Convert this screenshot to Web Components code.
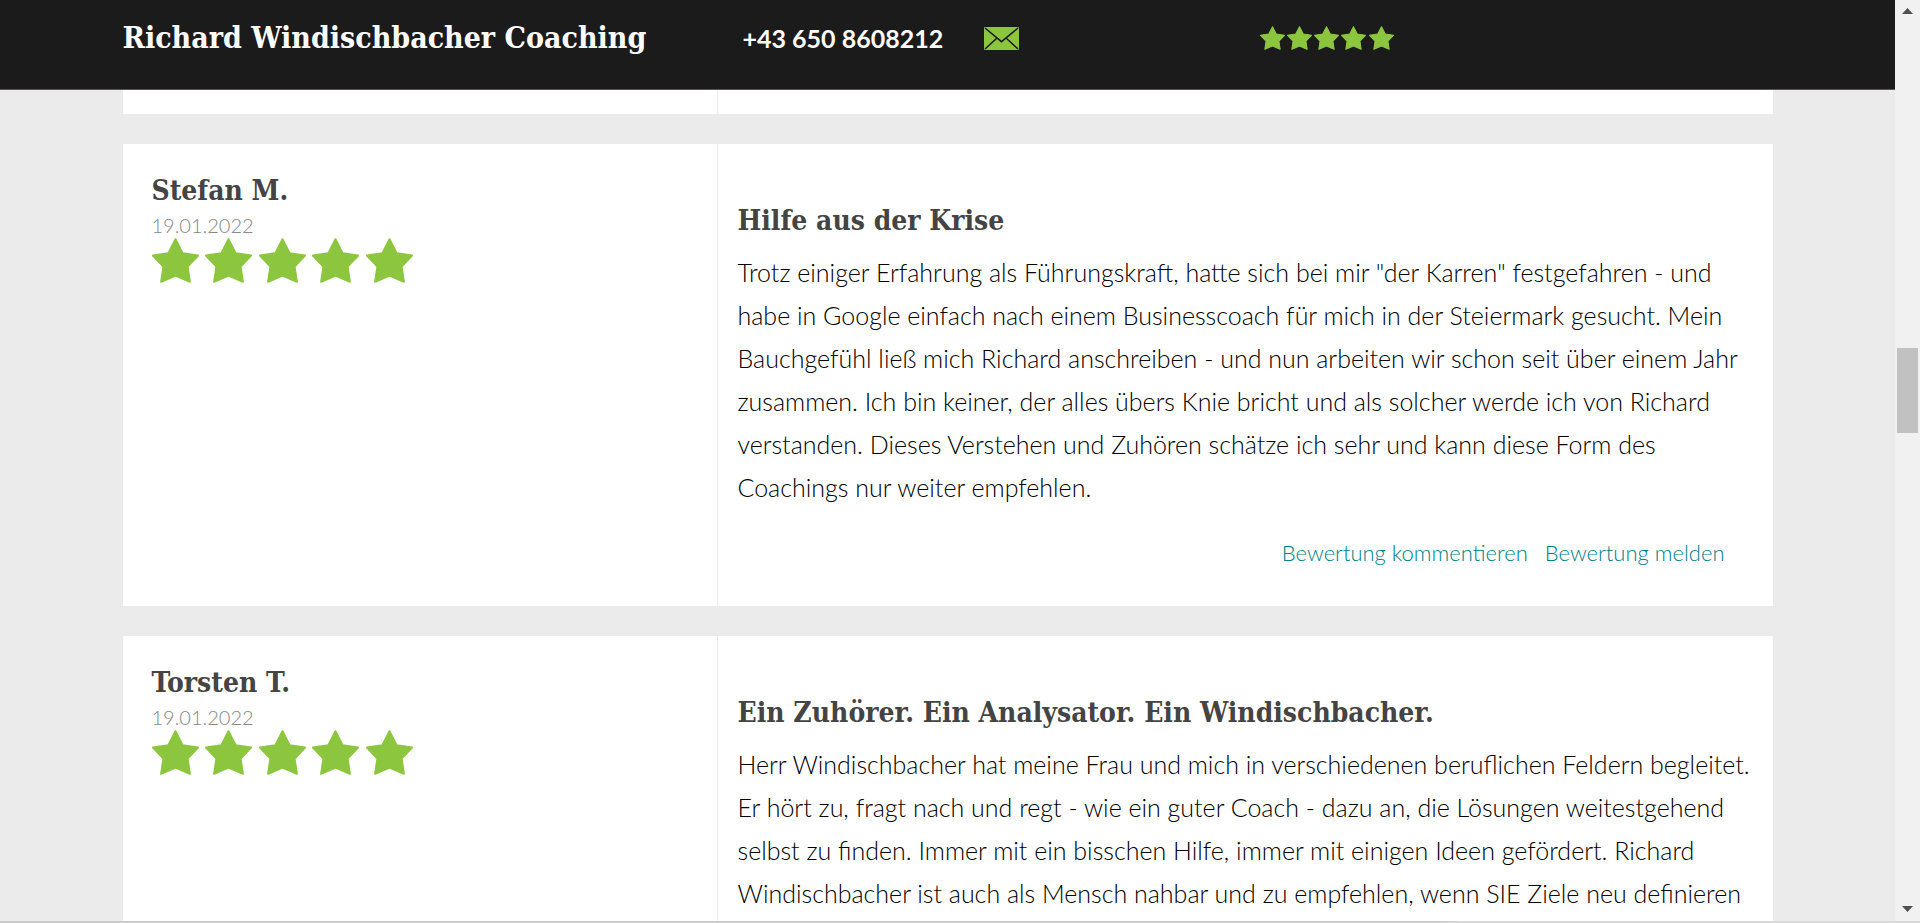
<!DOCTYPE html>
<html lang="de">
<head>
<meta charset="utf-8">
<title>Richard Windischbacher Coaching</title>
<style>
  body { margin: 0; background: #ebebeb; font-family: Lato, "Open Sans", sans-serif; overflow: hidden; }
</style>
</head>
<body>
<review-page>
  <site-header slot="header" phone="+43 650 8608212">Richard Windischbacher Coaching</site-header>
  <review-tail></review-tail>
  <review-card name="Stefan M." date="19.01.2022" headline="Hilfe aus der Krise">Trotz einiger Erfahrung als Führungskraft, hatte sich bei mir "der Karren" festgefahren - und habe in Google einfach nach einem Businesscoach für mich in der Steiermark gesucht. Mein Bauchgefühl ließ mich Richard anschreiben - und nun arbeiten wir schon seit über einem Jahr zusammen. Ich bin keiner, der alles übers Knie bricht und als solcher werde ich von Richard verstanden. Dieses Verstehen und Zuhören schätze ich sehr und kann diese Form des Coachings nur weiter empfehlen.</review-card>
  <review-card name="Torsten T." date="19.01.2022" headline="Ein Zuhörer. Ein Analysator. Ein Windischbacher.">Herr Windischbacher hat meine Frau und mich in verschiedenen beruflichen Feldern begleitet. Er hört zu, fragt nach und regt - wie ein guter Coach - dazu an, die Lösungen weitestgehend selbst zu finden. Immer mit ein bisschen Hilfe, immer mit einigen Ideen gefördert. Richard Windischbacher ist auch als Mensch nahbar und zu empfehlen, wenn SIE Ziele neu definieren</review-card>
  <scroll-rail slot="rail"></scroll-rail>
</review-page>

<script>
const define = (name, html, setup) => {
  const template = document.createElement('template');
  template.innerHTML = html;
  customElements.define(name, class extends HTMLElement {
    constructor() {
      super();
      this.attachShadow({ mode: 'open' }).append(template.content.cloneNode(true));
    }
    connectedCallback() { if (setup) setup(this, this.shadowRoot); }
  });
};

const star = `<svg viewBox="0 0 47 45" aria-hidden="true"><path fill="#8cc63f" stroke="#8cc63f" stroke-width="2" stroke-linejoin="round" d="M23.5 1.2 30.6 15.2 46 17.6 35.6 28.6 37.9 43.8 23.5 37.6 9.1 43.8 11.4 28.6 1 17.6 16.4 15.2Z"/></svg>`;

define('star-rating', `
<style>
  :host { display: flex; justify-content: space-between; width: var(--stars-width, 261px); }
  svg { display: block; width: var(--star-size, 47px); height: auto; }
</style>${star.repeat(5)}`);

define('site-header', `
<style>
  :host { display: block; background: #1b1b1b; border-bottom: 1px solid #5a5357; }
  .bar { display: grid; grid-template-columns: 620fr 241fr 276fr 513fr; align-items: center;
         box-sizing: border-box; max-width: 1650px; margin: 0 auto; padding: 18px 0 31px; color: #fff; }
  .title { font: bold 30px/40px "DejaVu Serif Condensed", "DejaVu Serif", serif; white-space: nowrap; }
  a { color: inherit; text-decoration: none; }
  .phone { font-size: 25px; line-height: 40px; font-weight: bold; white-space: nowrap; }
  .mail svg { display: block; width: 35px; height: 23px; }
  star-rating { --star-size: 25px; --stars-width: 134px; }
</style>
<div class="bar">
  <a class="title" href="#"><slot></slot></a>
  <a class="phone" href="tel:+436508608212"></a>
  <a class="mail" href="#kontakt" aria-label="E-Mail">
    <svg viewBox="0 0 35 23"><rect width="35" height="23" rx="1" fill="#8cc63f"/>
      <path d="M1 1 17.5 14.6 34 1M1 22 13 11M34 22 22 11" fill="none" stroke="#1b1b1b" stroke-width="1.6"/></svg>
  </a>
  <star-rating></star-rating>
</div>`, (el, root) => { root.querySelector('.phone').textContent = el.getAttribute('phone'); });

const cardBox = `
  :host { display: grid; grid-template-columns: 36% 1fr; background: #fff; }
  .body { border-left: 1px solid #ededed; }`;

define('review-tail', `<style>${cardBox}
  :host { height: 24px; }
</style><div></div><div class="body"></div>`);

define('review-card', `
<style>${cardBox}
  .author { padding: 26px 29px; }
  h2, h3 { margin: 0; color: #444; font: bold 28px/42px "DejaVu Serif Condensed", "DejaVu Serif", serif; }
  time { display: block; color: #888; font-size: 20px; line-height: 26px; font-weight: 300; }
  .body { padding: 56px 12px 38px 20px; }
  p { margin: 9px 0 29px; color: #000; font-size: 25px; line-height: 43px; font-weight: 300; }
  nav { display: flex; justify-content: flex-end; gap: 17px; padding-right: 36px; }
  a { color: #007f8a; text-decoration: none; font-size: 22px; line-height: 30px; font-weight: 300; }
</style>
<div class="author"><h2></h2><time></time><star-rating></star-rating></div>
<div class="body">
  <h3></h3>
  <p><slot></slot></p>
  <nav><a href="#kommentieren">Bewertung kommentieren</a><a href="#melden">Bewertung melden</a></nav>
</div>`, (el, root) => {
  root.querySelector('h2').textContent = el.getAttribute('name');
  root.querySelector('time').textContent = el.getAttribute('date');
  root.querySelector('h3').textContent = el.getAttribute('headline');
});

define('scroll-rail', `
<style>
  :host { display: grid; grid-template-rows: 22px 326fr 85px 464fr 24px; justify-items: center; background: #f1f1f1; }
  svg { display: block; width: 11px; height: 6px; align-self: center; }
  .thumb { grid-row: 3; width: 21px; background: #c1c1c1; }
  .down { grid-row: 5; }
</style>
<svg viewBox="0 0 11 6"><path fill="#505050" d="M0 6 5.500 0 11 6Z"/></svg>
<div class="thumb"></div>
<svg class="down" viewBox="0 0 11 6"><path fill="#505050" d="M0 0h11L5.500 6Z"/></svg>`);

define('review-page', `
<style>
  :host { display: grid; grid-template-columns: 1fr 25px; grid-template-rows: 1fr 2px; height: 100vh; }
  .view { overflow: hidden; min-width: 0; min-height: 0; }
  .list { display: flex; flex-direction: column; gap: 30px; max-width: 1650px; margin: 0 auto; }
  .edge { grid-column: 1 / -1; background: linear-gradient(90deg, #cbcbcb 75%, #d9d9d9 76%); }
</style>
<div class="view">
  <slot name="header"></slot>
  <main class="list"><slot></slot></main>
</div>
<slot name="rail"></slot>
<div class="edge"></div>`);
</script>
</body>
</html>
